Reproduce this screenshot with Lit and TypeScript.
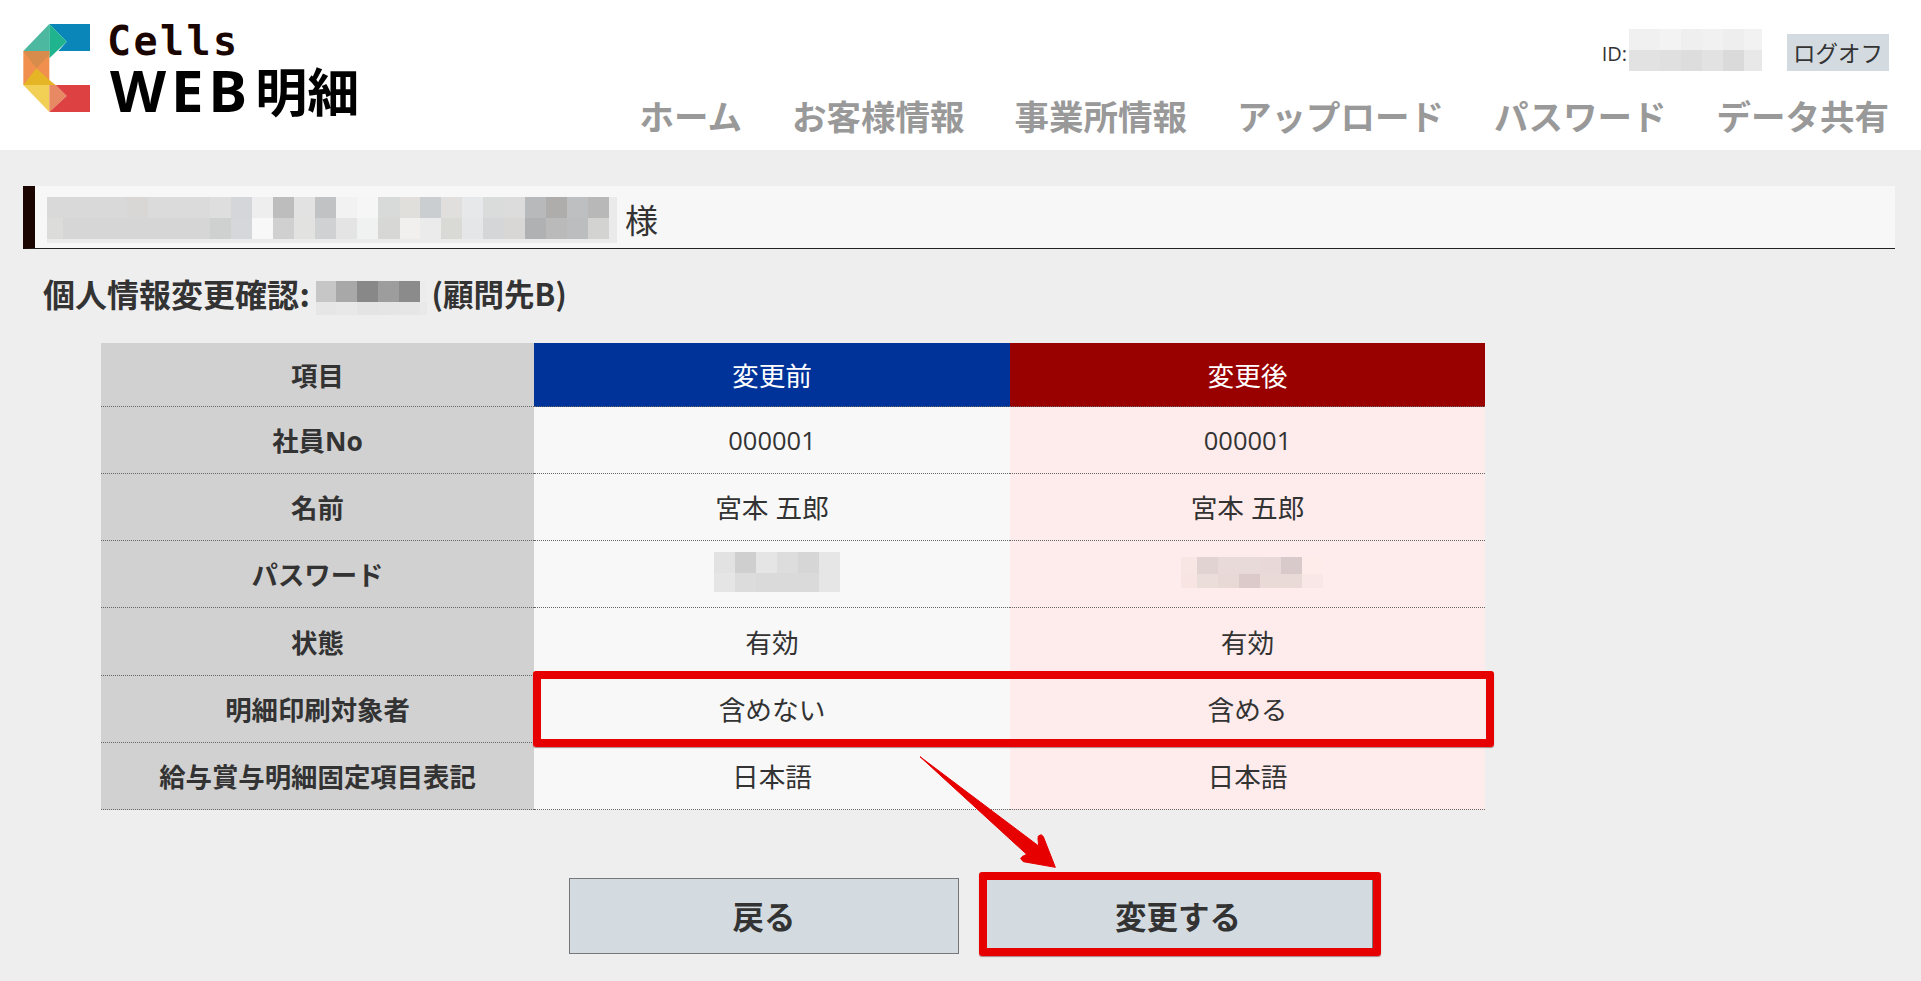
import { LitElement, html, css, svg } from "lit";
import { customElement, property } from "lit/decorators.js";

type Run = [number, string];

@customElement("pixel-mosaic")
class PixelMosaic extends LitElement {
  @property({ attribute: false }) rows: { h: number; cells: Run[] }[] = [];
  static styles = css`
    :host { display: block; flex: none; }
    .row { display: flex; }
    .cell { flex: none; height: 100%; }
  `;
  render() {
    return this.rows.map(
      (r) => html`<div class="row" style="height:${r.h}px">
        ${r.cells.map((c) => html`<div class="cell" style="width:${c[0]}px;background:${c[1]}"></div>`)}
      </div>`
    );
  }
}

const NAME_MOSAIC = [
  { h: 21, cells: [[79, "#d9d9d9"], [22, "#d8d7d6"], [62, "#dbdbdb"], [21, "#dedede"], [21, "#d4d6d9"], [21, "#eeeeee"], [21, "#bdbdbd"], [21, "#e2e2e2"], [21, "#c1c2c4"], [21, "#f2f2f2"], [21, "#f6f6f6"], [22, "#d8dad9"], [20, "#e0dfdc"], [21, "#cbced1"], [21, "#e0dfde"], [21, "#e6e8ea"], [21, "#dadcdc"], [21, "#dcdcdc"], [21, "#b8b9ba"], [21, "#aeadab"], [21, "#bdbfc1"], [21, "#b8b8b8"], [8, "#eaeaea"]] as Run[] },
  { h: 21, cells: [[16, "#dcdcda"], [147, "#d6d6d6"], [21, "#cfd1d0"], [21, "#d5d7da"], [21, "#f8f8f8"], [21, "#d0d0d0"], [21, "#e2e2e0"], [21, "#d0d1d3"], [21, "#e4e4e4"], [21, "#f0f1f1"], [22, "#d7d7d5"], [20, "#f1f0ee"], [21, "#ebebeb"], [21, "#d9d9d6"], [21, "#e4e6e8"], [21, "#d5d6d8"], [21, "#d9d7d6"], [21, "#b0b1b3"], [21, "#bbbabb"], [21, "#bcbdbf"], [21, "#d3d3d1"], [8, "#eaeaea"]] as Run[] },
  { h: 4, cells: [[570, "#ebebeb"]] as Run[] },
];
const TITLE_MOSAIC = [
  { h: 21, cells: [[20, "#c6c6c6"], [21, "#a8a8a8"], [21, "#888888"], [21, "#9d9d9d"], [21, "#8b8b8b"], [7, "#ececec"]] as Run[] },
  { h: 13, cells: [[20, "#e6e6e6"], [21, "#e8e8e8"], [21, "#e4e4e4"], [21, "#e5e5e5"], [21, "#e6e6e6"], [7, "#e9e9e9"]] as Run[] },
];
const ID_MOSAIC = [
  { h: 21, cells: [[31, "#f0f0f0"], [21, "#f3f3f3"], [21, "#efefef"], [21, "#f1f1f1"], [21, "#eeeeee"], [18, "#f2f2f2"]] as Run[] },
  { h: 21, cells: [[31, "#e2e2e2"], [21, "#e0e0e0"], [21, "#dddddd"], [21, "#e2e2e2"], [21, "#dadada"], [18, "#e8e8e8"]] as Run[] },
];
const PW_BEFORE = [
  { h: 21, cells: [[21, "#e2e2e2"], [21, "#cfcfcf"], [21, "#e5e5e5"], [21, "#dddddd"], [21, "#d6d6d6"], [21, "#e6e6e6"]] as Run[] },
  { h: 19, cells: [[21, "#e5e5e5"], [21, "#dcdcdc"], [21, "#dadada"], [21, "#dadada"], [21, "#dadada"], [21, "#e6e6e6"]] as Run[] },
];
const PW_AFTER = [
  { h: 17, cells: [[16, "#f8e6e4"], [21, "#e2d3d3"], [42, "#e8dad8"], [21, "#e8d9d8"], [21, "#d8cacb"], [21, "#feecea"]] as Run[] },
  { h: 14, cells: [[16, "#f7e4e3"], [21, "#ebdeda"], [21, "#e8d9d7"], [21, "#dcc9c9"], [42, "#e9dad8"], [21, "#f8e7e6"]] as Run[] },
];

const LOGO_SHAPES: [string, string][] = [
  ["88,12 210,12 210,93 115,93 140,65", "#0a86b8"],
  ["88,12 10,93 88,93 88,115", "#4cb8a0"],
  ["88,12 140,65 88,115", "#20b48e"],
  ["10,93 88,93 88,195 10,195", "#f08f4e"],
  ["10,93 88,93 88,105 49,145", "#d78c4c"],
  ["49,145 88,180 107,195 10,195", "#e6b525"],
  ["10,195 88,195 88,276", "#f1d055"],
  ["88,195 107,195 140,228 88,276", "#e78a63"],
  ["107,195 210,195 210,276 88,276 140,228", "#dd4141"],
];

const ROWS: { label: string; before: unknown; after: unknown }[] = [
  { label: "社員No", before: html`<span class="num">000001</span>`, after: html`<span class="num">000001</span>` },
  { label: "名前", before: "宮本 五郎", after: "宮本 五郎" },
  { label: "パスワード", before: html`<pixel-mosaic class="pw" .rows=${PW_BEFORE}></pixel-mosaic>`, after: html`<pixel-mosaic class="pw" .rows=${PW_AFTER}></pixel-mosaic>` },
  { label: "状態", before: "有効", after: "有効" },
  { label: "明細印刷対象者", before: "含めない", after: "含める" },
  { label: "給与賞与明細固定項目表記", before: "日本語", after: "日本語" },
];

const NAV = ["ホーム", "お客様情報", "事業所情報", "アップロード", "パスワード", "データ共有"];

@customElement("app-root")
class AppRoot extends LitElement {
  static styles = css`
    :host {
      display: block;
      position: relative;
      min-height: 981px;
      overflow: hidden;
      background: #eeeeee;
      color: #333;
      font-family: "Open Sans", "Noto Sans CJK JP", sans-serif;
    }
    .header {
      height: 150px;
      background: #fff;
      display: flex;
      justify-content: space-between;
      padding: 0 32px 0 20px;
      box-sizing: border-box;
    }
    .brand { display: flex; padding-top: 19px; align-items: flex-start; }
    .mark { width: 80px; height: 100px; flex: none; margin-top: 1px; }
    .wordmark { margin-left: 10px; display: flex; flex-direction: column; }
    .cells {
      font: bold 40px/44px "DejaVu Sans Mono", monospace;
      letter-spacing: 2.4px;
      color: #1a0500;
      height: 44px;
      margin-left: -3px;
    }
    .web {
      font: bold 58px/56px "Noto Sans", "Noto Sans CJK JP", sans-serif;
      letter-spacing: 5px;
      color: #000;
      display: flex;
      align-items: baseline;
      white-space: nowrap;
      margin-top: -1px;
    }
    .web span { font-size: 52px; letter-spacing: 0; margin-left: 3px; font-family: "Noto Sans CJK JP", sans-serif; }
    .head-right { display: flex; flex-direction: column; align-items: flex-end; }
    .user { display: flex; align-items: flex-start; height: 71px; padding-top: 29px; box-sizing: border-box; }
    .id-label { font-size: 20px; line-height: 50px; margin-right: 2px; }
    .logoff {
      margin: 5px 0 0 25px;
      width: 102px;
      height: 37px;
      border: 0;
      padding: 0;
      background: #d3dbe1;
      color: #333;
      font: 22.5px/37px "Noto Sans CJK JP", sans-serif;
    }
    .nav { display: flex; gap: 50px; margin-top: 19px; }
    .nav a {
      font: 700 34.5px/50px "Noto Sans CJK JP", sans-serif;
      color: #999;
      text-decoration: none;
      white-space: nowrap;
    }
    .main { padding: 36px 26px 0 23px; }
    .bar {
      height: 63px;
      box-sizing: border-box;
      background: #f7f7f7;
      border-left: 12px solid #1a0500;
      border-bottom: 1px solid #222;
      padding: 11px 0 0 12px;
      display: flex;
      align-items: flex-start;
    }
    .sama { font: 33px/44px "Noto Sans CJK JP", sans-serif; margin-left: 8px; }
    .title {
      display: flex;
      align-items: flex-start;
      height: 40px;
      margin: 26px 0 28px 20px;
      font: 700 32px/36px "Noto Sans CJK JP", sans-serif;
      color: #333;
      white-space: nowrap;
    }
    .title .colon { margin: 0 6.5px 0 0.5px; }
    .title pixel-mosaic { margin: 6px 4px 0 0; }
    .title .kind { font-size: 30.5px; }
    .table {
      margin-left: 78px;
      width: 1384px;
      display: grid;
      grid-template-columns: 433px 476px 475px;
      grid-template-rows: 64px repeat(6, 67.17px);
      font-size: 26.7px;
    }
    .cell {
      display: flex;
      align-items: center;
      justify-content: center;
      border-bottom: 1px dotted #666;
      box-sizing: border-box;
      min-width: 0;
      padding-bottom: 1px;
    }
    .num { font-size: 25.5px; }
    .lab { background: #d1d1d1; font-weight: 700; font-size: 26.4px; }
    .before { background: #f8f8f8; }
    .after { background: #feecec; }
    .hb { background: #003399; color: #fff; }
    .ha { background: #990000; color: #fff; }
    .pw { margin-left: 9px; margin-bottom: 3px; }
    .actions { display: flex; gap: 24px; margin: 68px 0 0 546px; }
    .btn {
      width: 390px;
      height: 76px;
      box-sizing: border-box;
      background: #d3dbe1;
      border: 1px solid #777;
      color: #333;
      font: 700 31.5px/1 "Noto Sans CJK JP", sans-serif;
      padding: 0;
    }
    .frame {
      position: absolute;
      box-sizing: border-box;
      border: 8px solid #e60000;
      border-radius: 3px;
      box-shadow: 0 1px 1px rgba(90, 0, 0, 0.45);
      pointer-events: none;
    }
    .frame-row { left: 533px; top: 671px; width: 961px; height: 76px; }
    .frame-btn { left: 979px; top: 872px; width: 402px; height: 84px; }
    .arrow { position: absolute; left: 900px; top: 740px; width: 200px; height: 140px; pointer-events: none; }
  `;

  render() {
    return html`
      <header class="header">
        <div class="brand">
          <svg class="mark" viewBox="0 0 240 300">
            ${LOGO_SHAPES.map(([p, c]) => svg`<polygon points=${p} fill=${c}></polygon>`)}
          </svg>
          <div class="wordmark">
            <div class="cells">Cells</div>
            <div class="web">WEB<span>明細</span></div>
          </div>
        </div>
        <div class="head-right">
          <div class="user">
            <span class="id-label">ID:</span>
            <pixel-mosaic .rows=${ID_MOSAIC}></pixel-mosaic>
            <button class="logoff">ログオフ</button>
          </div>
          <nav class="nav">${NAV.map((n) => html`<a href="#">${n}</a>`)}</nav>
        </div>
      </header>
      <main class="main">
        <div class="bar">
          <pixel-mosaic .rows=${NAME_MOSAIC}></pixel-mosaic>
          <span class="sama">様</span>
        </div>
        <div class="title">
          <span>個人情報変更確認</span><span class="colon">:</span>
          <pixel-mosaic .rows=${TITLE_MOSAIC}></pixel-mosaic>
          <span class="kind">(顧問先B)</span>
        </div>
        <div class="table">
          <div class="cell lab">項目</div>
          <div class="cell hb">変更前</div>
          <div class="cell ha">変更後</div>
          ${ROWS.map(
            (r) => html`
              <div class="cell lab">${r.label}</div>
              <div class="cell before">${r.before}</div>
              <div class="cell after">${r.after}</div>
            `
          )}
        </div>
        <div class="actions">
          <button class="btn">戻る</button>
          <button class="btn">変更する</button>
        </div>
      </main>
      <div class="frame frame-row"></div>
      <div class="frame frame-btn"></div>
      <svg class="arrow" viewBox="0 0 600 420">
        <polygon
          points="60,50 380,343 366,350 362,356 370,365 466,382 430,290 424,284 415,288 414,296 416,318"
          fill="#e60000"
          stroke="#e60000"
          stroke-width="3"
          stroke-linejoin="round"
        ></polygon>
      </svg>
    `;
  }
}
